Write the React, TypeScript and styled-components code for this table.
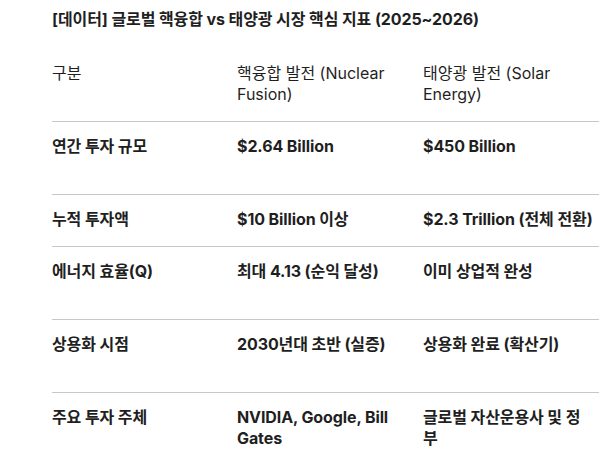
import styled, { createGlobalStyle } from 'styled-components';

interface Row {
  label: string;
  fusion: string;
  solar: string;
  tall?: boolean;
}

const rows: Row[] = [
  { label: '연간 투자 규모', fusion: '$2.64 Billion', solar: '$450 Billion', tall: true },
  { label: '누적 투자액', fusion: '$10 Billion 이상', solar: '$2.3 Trillion (전체 전환)' },
  { label: '에너지 효율(Q)', fusion: '최대 4.13 (순익 달성)', solar: '이미 상업적 완성', tall: true },
  { label: '상용화 시점', fusion: '2030년대 초반 (실증)', solar: '상용화 완료 (확산기)', tall: true },
  { label: '주요 투자 주체', fusion: 'NVIDIA, Google, Bill Gates', solar: '글로벌 자산운용사 및 정부' },
];

function App() {
  return (
    <>
      <GlobalStyle />
      <Page>
        <Title>[데이터] 글로벌 핵융합 vs 태양광 시장 핵심 지표 (2025~2026)</Title>
        <Table>
          <HeadRow>
            <HeadCell>구분</HeadCell>
            <HeadCell>핵융합 발전 (Nuclear Fusion)</HeadCell>
            <HeadCell>태양광 발전 (Solar Energy)</HeadCell>
          </HeadRow>
          {rows.map((row) => (
            <BodyRow key={row.label} $tall={row.tall}>
              <Cell>{row.label}</Cell>
              <Cell>{row.fusion}</Cell>
              <Cell>{row.solar}</Cell>
            </BodyRow>
          ))}
        </Table>
      </Page>
    </>
  );
}

const GlobalStyle = createGlobalStyle`
  body {
    margin: 0;
    background: #ffffff;
    overflow: hidden;
    font-family: Inter, 'Noto Sans CJK KR', sans-serif;
    color: #1f1f1f;
  }
`;

const Page = styled.div`
  padding: 9px 0 0 52px;
  width: 557px;
`;

const Title = styled.h2`
  margin: 0;
  font-size: 16px;
  line-height: 21px;
  font-weight: 700;
  letter-spacing: -0.1px;
  white-space: nowrap;
`;

const Table = styled.div`
  margin-top: 33px;
  display: flex;
  flex-direction: column;
`;

const HeadRow = styled.div`
  display: grid;
  grid-template-columns: 185px 186px 186px;
  padding-bottom: 16px;
`;

const BodyRow = styled.div<{ $tall?: boolean }>`
  display: grid;
  grid-template-columns: 185px 186px 186px;
  border-top: 1px solid #c7c7c7;
  padding-top: 14px;
  padding-bottom: ${(props) => (props.$tall ? '37px' : '16px')};
`;

const HeadCell = styled.div`
  font-size: 16px;
  line-height: 21px;
  font-weight: 400;
  padding-right: 16px;
`;

const Cell = styled.div`
  font-size: 16px;
  line-height: 21px;
  font-weight: 700;
  padding-right: 16px;
  letter-spacing: -0.1px;
`;

export default App;
